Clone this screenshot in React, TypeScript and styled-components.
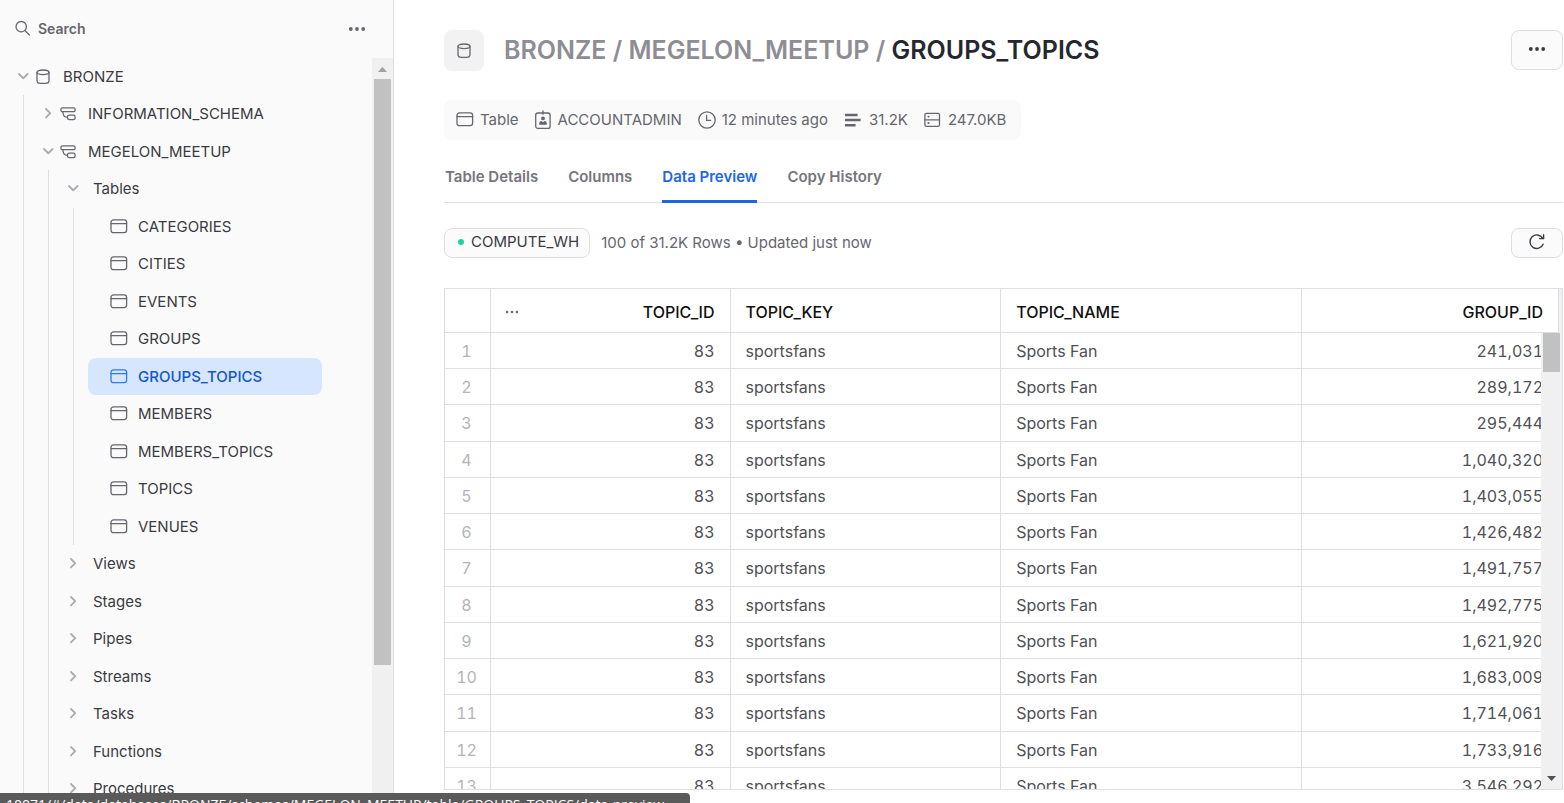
import React from "react";
import styled, { createGlobalStyle, css } from "styled-components";

const color = {
  text: "#3a3a42",
  muted: "#66666e",
  faint: "#8d8d93",
  line: "#dfdfe1",
  panel: "#fafafa",
  blue: "#1d66e5",
};

const Global = createGlobalStyle`
  *, *::before, *::after { box-sizing: border-box; }
  body {
    margin: 0;
    background: #fff;
    color: ${color.text};
    font-family: Inter, "Liberation Sans", sans-serif;
    font-size: 15px;
    overflow: hidden;
  }
  button, input { font: inherit; color: inherit; }
  a { color: inherit; text-decoration: none; }
  svg { display: block; flex: none; }
`;

const Page = styled.div`
  display: flex;
  height: 100vh;
`;

/* Sidebar */

const Sidebar = styled.aside`
  display: flex;
  flex-direction: column;
  flex: none;
  width: 394px;
  border-right: 1px solid ${color.line};
  background: ${color.panel};
`;

const SidebarHeader = styled.div`
  display: flex;
  align-items: center;
  justify-content: space-between;
  flex: none;
  height: 58px;
  padding: 0 26px 0 14px;
`;

const SearchLabel = styled.label`
  display: flex;
  align-items: center;
  gap: 7px;
  padding-bottom: 2px;
  color: ${color.muted};
`;

const SearchInput = styled.input`
  width: 240px;
  padding: 0;
  border: 0;
  outline: 0;
  background: transparent;
  font-size: 14px;
  font-weight: 600;
  &::placeholder { color: ${color.muted}; opacity: 1; }
`;

const PlainButton = styled.button`
  display: flex;
  padding: 0;
  border: 0;
  background: none;
  color: ${color.muted};
`;

const SidebarBody = styled.div`
  display: flex;
  flex: 1;
  min-height: 0;
`;

const Tree = styled.ul`
  flex: 1;
  margin: 0;
  padding: 0 0 0 10px;
  overflow: hidden;
  list-style: none;
`;

const TreeRow = styled.li`
  display: flex;
  align-items: stretch;
  height: 37px;
  &:nth-child(even) { height: 38px; }
`;

const Guide = styled.span`
  flex: none;
  width: 25px;
  background: linear-gradient(${color.line}, ${color.line}) 13px 0 / 1px 100% no-repeat;
`;

const Toggle = styled.button`
  display: flex;
  align-items: center;
  justify-content: center;
  flex: none;
  width: 25px;
  height: 36px;
  padding: 0;
  border: 0;
  background: none;
  color: #adadb1;
`;

const NodeLink = styled.a<{ $kind: Kind; $selected?: boolean }>`
  display: flex;
  align-items: center;
  gap: 12px;
  height: 37px;
  white-space: nowrap;
  svg { color: ${color.muted}; }
  ${(p) => p.$kind === "group" && css`padding-left: 8px;`}
  ${(p) =>
    p.$kind === "table" &&
    css`
      flex: 1;
      gap: 10px;
      margin: 0 50px 0 3px;
      padding-left: 22px;
      border-radius: 8px;
    `}
  ${(p) =>
    p.$selected &&
    css`
      background: #d6e6ff;
      color: #1455cc;
      font-weight: 500;
      svg { color: #2f78f0; }
    `}
`;

const ScrollTrack = styled.div`
  flex: none;
  width: 21px;
  padding: 9px 2px 0;
  background: #f0f0f0;
`;

const ScrollArrow = styled.div`
  height: 12px;
  padding-left: 4px;
  color: #a0a0a0;
`;

const ScrollThumb = styled.div`
  height: 586px;
  background: #c1c1c1;
`;

/* Main area */

const Main = styled.main`
  display: flex;
  flex: 1;
  flex-direction: column;
  min-width: 0;
  padding: 30px 1px 13px 50px;
`;

const TitleBar = styled.header`
  display: flex;
  align-items: flex-start;
  gap: 20px;
  height: 41px;
`;

const TitleIcon = styled.span`
  display: flex;
  align-items: center;
  justify-content: center;
  width: 40px;
  height: 41px;
  border-radius: 8px;
  background: #f2f2f2;
  color: ${color.muted};
`;

const Title = styled.h1`
  flex: 1;
  margin: 0;
  color: ${color.faint};
  font-size: 25px;
  font-weight: 600;
  line-height: 40px;
  white-space: nowrap;
  strong { color: #26272e; font-weight: 600; }
`;

const IconButton = styled.button<{ $tall?: boolean }>`
  display: flex;
  align-items: center;
  justify-content: center;
  width: 52px;
  height: ${(p) => (p.$tall ? 40 : 30)}px;
  padding: 0 0 2px;
  border: 1px solid ${color.line};
  border-radius: 8px;
  background: #fbfbfb;
`;

const Facts = styled.ul`
  display: flex;
  align-items: center;
  align-self: flex-start;
  gap: 16px;
  height: 40px;
  margin: 29px 0 0;
  padding: 0 15px 1px 12px;
  border-radius: 8px;
  background: ${color.panel};
  color: ${color.muted};
  list-style: none;
`;

const Fact = styled.li`
  display: flex;
  align-items: center;
  gap: 6px;
  white-space: nowrap;
`;

const Tabs = styled.nav`
  display: flex;
  gap: 30px;
  height: 63px;
  padding-left: 1px;
  border-bottom: 1px solid ${color.line};
`;

const Tab = styled.a<{ $active?: boolean }>`
  height: 63px;
  padding-top: 25px;
  border-bottom: 3px solid ${(p) => (p.$active ? color.blue : "transparent")};
  color: ${(p) => (p.$active ? color.blue : "#75757b")};
  font-weight: 600;
  line-height: 24px;
`;

const Toolbar = styled.div`
  display: flex;
  align-items: center;
  gap: 11px;
  margin: 25px 0 30px;
`;

const WarehouseButton = styled.button`
  display: flex;
  align-items: center;
  gap: 7px;
  height: 30px;
  padding: 0 10px 3px 13px;
  border: 1px solid ${color.line};
  border-radius: 8px;
  background: #fbfbfb;
`;

const StatusDot = styled.span`
  width: 6px;
  height: 6px;
  border-radius: 50%;
  background: #17d79c;
`;

const RowInfo = styled.span`
  flex: 1;
  padding-bottom: 2px;
  color: ${color.muted};
`;

const GridPanel = styled.div`
  position: relative;
  flex: 1;
  min-height: 0;
  padding-right: 3px;
  overflow: hidden;
  border: 1px solid ${color.line};
  border-width: 1px 1px 1px 0;
  background: #f0f0f0;
`;

const DataTable = styled.table`
  width: 100%;
  border-collapse: separate;
  border-spacing: 0;
  border-left: 1px solid ${color.line};
  table-layout: fixed;
  background: #fff;
  color: #505055;
  font-size: 16px;
  font-variant-numeric: tabular-nums;
  tbody tr { height: 36px; }
  tbody tr:nth-child(4n + 3) { height: 37px; }
`;

const Cell = styled.td<{ $align?: "right" | "center" }>`
  padding: 0 15px;
  border: solid ${color.line};
  border-width: 0 1px 1px 0;
  font-weight: 400;
  line-height: 20px;
  text-align: ${(p) => p.$align ?? "left"};
  white-space: nowrap;
`;

const HeadCell = styled(Cell).attrs({ as: "th" })`
  height: 44px;
  padding-top: 3px;
  color: #111;
  font-weight: 500;
`;

const IndexCell = styled(Cell)`
  padding-right: 2px;
  padding-left: 0;
  color: #b4b4b8;
`;

const HeadContent = styled.div`
  display: flex;
  align-items: center;
  justify-content: space-between;
`;

const GridScroll = styled.div`
  position: absolute;
  top: 44px;
  right: 0;
  bottom: 0;
  display: flex;
  flex-direction: column;
  justify-content: space-between;
  width: 21px;
  padding: 0 2px 8px;
  background: #f0f0f0;
  color: #505050;
`;

const GridThumb = styled.div`
  height: 39px;
  background: #c1c1c1;
`;

const ArrowSlot = styled.div`
  padding-left: 4px;
`;

const StatusBubble = styled.div`
  position: fixed;
  bottom: 0;
  left: 0;
  width: 690px;
  height: 10px;
  padding: 2px 6px 0;
  overflow: hidden;
  border-top-right-radius: 4px;
  background: #5a5a5a;
  color: #fff;
  font-family: "Open Sans", "Noto Sans", sans-serif;
  font-size: 14px;
  line-height: 19px;
  white-space: nowrap;
`;

/* Icons */

const stroke = {
  fill: "none",
  stroke: "currentColor",
  strokeWidth: 1.3,
  strokeLinecap: "round" as const,
  strokeLinejoin: "round" as const,
  "aria-hidden": true,
};

const SearchIcon = () => (
  <svg width="17" height="17" viewBox="0 0 17 17" {...stroke}>
    <circle cx="7.2" cy="6.7" r="5.2" />
    <path d="M11 10.6 15.4 15" />
  </svg>
);

const DotsIcon = ({ size = 18, r = 1.9, gap = 6.2 }) => (
  <svg width={size} height="6" viewBox={`0 0 ${size} 6`} fill="currentColor" aria-hidden>
    <circle cx={size / 2 - gap} cy="3" r={r} />
    <circle cx={size / 2} cy="3" r={r} />
    <circle cx={size / 2 + gap} cy="3" r={r} />
  </svg>
);

const ChevronIcon = ({ open }: { open: boolean }) => (
  <svg width="12" height="12" viewBox="0 0 12 12" {...stroke} strokeWidth={1.9}>
    <path d={open ? "M2 4 6.3 8.2 10.6 4" : "M4 2 8.2 6.2 4 10.4"} />
  </svg>
);

const DatabaseIcon = () => (
  <svg width="16" height="16" viewBox="0 0 16 16" {...stroke}>
    <ellipse cx="8" cy="3.3" rx="6" ry="2.3" />
    <path d="M2 3.3v8.2c0 1.8 1.6 2.9 3.6 2.9h4.8c2 0 3.6-1.1 3.6-2.9V3.3" />
  </svg>
);

const SchemaIcon = () => (
  <svg width="16" height="16" viewBox="0 0 16 16" {...stroke}>
    <rect x="0.9" y="1.9" width="14.2" height="3.8" rx="1.5" />
    <rect x="7.5" y="9.2" width="7.6" height="4.4" rx="1.7" />
    <path d="M2.9 5.7c0 3.6 1.7 5.6 4.6 5.6" />
  </svg>
);

const TableIcon = () => (
  <svg width="18" height="16" viewBox="0 0 18 16" {...stroke}>
    <rect x="1" y="0.9" width="15.6" height="12.8" rx="2.4" />
    <path d="M1 4.6h15.6" />
  </svg>
);

const RoleIcon = () => (
  <svg width="17" height="20" viewBox="1 0 17 20" {...stroke}>
    <rect x="1.7" y="3" width="14.4" height="15.4" rx="2.2" />
    <path d="M9 .8v3.4" />
    <circle cx="9" cy="8.4" r="1.9" fill="currentColor" stroke="none" />
    <path d="M5.2 14.8v-1.6c0-1.4 1.2-2.3 2.4-2.3L9 12.3l1.4-1.4c1.2 0 2.4.9 2.4 2.3v1.6z" fill="currentColor" stroke="none" />
  </svg>
);

const ClockIcon = () => (
  <svg width="18" height="20" viewBox="1 0 18 20" {...stroke}>
    <circle cx="10" cy="10" r="8.2" />
    <path d="M9.6 5.4v5h4" />
  </svg>
);

const RowsIcon = () => (
  <svg width="19" height="16" viewBox="0 0 19 16" {...stroke} strokeWidth={2.5} strokeLinecap="butt">
    <path d="M1 2.9h12.6M1 8.1h15.6M1 13.3h10.6" />
  </svg>
);

const StorageIcon = () => (
  <svg width="18" height="16" viewBox="1 0 18 16" {...stroke}>
    <rect x="1.9" y="1.3" width="14.6" height="13" rx="1.6" />
    <path d="M1.9 7.8h14.6" />
    <path d="M5.3 4.6h.4M5.3 11h.4" strokeWidth={1.8} />
  </svg>
);

const RefreshIcon = () => (
  <svg width="18" height="18" viewBox="0 0 18 18" {...stroke} strokeWidth={1.4}>
    <path d="M15.1 11.2A6.8 6.8 0 1 1 14.6 5.2" />
    <path d="M15.6 1.8v3.8h-4" />
  </svg>
);

const TriangleIcon = ({ down }: { down?: boolean }) => (
  <svg width="9" height="5" viewBox="0 0 9 5" fill="currentColor" aria-hidden>
    <path d={down ? "M0 0h9L4.5 5z" : "M0 5h9L4.5 0z"} />
  </svg>
);

/* Data */

type Kind = "database" | "schema" | "group" | "table";

interface TreeNode {
  kind: Kind;
  name: string;
  open?: boolean;
}

const depth: Record<Kind, number> = { database: 0, schema: 1, group: 2, table: 3 };

const kindIcon: Record<Kind, React.ReactNode> = {
  database: <DatabaseIcon />,
  schema: <SchemaIcon />,
  group: null,
  table: <TableIcon />,
};

const tables = [
  "CATEGORIES", "CITIES", "EVENTS", "GROUPS", "GROUPS_TOPICS",
  "MEMBERS", "MEMBERS_TOPICS", "TOPICS", "VENUES",
];

const closedGroups = ["Views", "Stages", "Pipes", "Streams", "Tasks", "Functions", "Procedures"];

const nodes: TreeNode[] = [
  { kind: "database", name: "BRONZE", open: true },
  { kind: "schema", name: "INFORMATION_SCHEMA" },
  { kind: "schema", name: "MEGELON_MEETUP", open: true },
  { kind: "group", name: "Tables", open: true },
  ...tables.map((name): TreeNode => ({ kind: "table", name })),
  ...closedGroups.map((name): TreeNode => ({ kind: "group", name })),
];

const facts: [React.ReactNode, string][] = [
  [<TableIcon />, "Table"],
  [<RoleIcon />, "ACCOUNTADMIN"],
  [<ClockIcon />, "12 minutes ago"],
  [<RowsIcon />, "31.2K"],
  [<StorageIcon />, "247.0KB"],
];

const tabs = ["Table Details", "Columns", "Data Preview", "Copy History"];

const groupIds = [
  "241,031", "289,172", "295,444", "1,040,320", "1,403,055", "1,426,482", "1,491,757",
  "1,492,775", "1,621,920", "1,683,009", "1,714,061", "1,733,916", "3,546,292",
];

const selectedTable = "GROUPS_TOPICS";

export default function App() {
  return (
    <>
      <Global />
      <Page>
        <Sidebar>
          <SidebarHeader>
            <SearchLabel>
              <SearchIcon />
              <SearchInput type="text" placeholder="Search" aria-label="Search" />
            </SearchLabel>
            <PlainButton aria-label="More options">
              <DotsIcon size={20} />
            </PlainButton>
          </SidebarHeader>
          <SidebarBody>
            <Tree>
              {nodes.map((node) => (
                <TreeRow key={node.name}>
                  {Array.from({ length: depth[node.kind] }, (_, i) => (
                    <Guide key={i} />
                  ))}
                  {node.kind !== "table" && (
                    <Toggle aria-label={`Toggle ${node.name}`} aria-expanded={!!node.open}>
                      <ChevronIcon open={!!node.open} />
                    </Toggle>
                  )}
                  <NodeLink href="#" $kind={node.kind} $selected={node.name === selectedTable}>
                    {kindIcon[node.kind]}
                    {node.name}
                  </NodeLink>
                </TreeRow>
              ))}
            </Tree>
            <ScrollTrack>
              <ScrollArrow>
                <TriangleIcon />
              </ScrollArrow>
              <ScrollThumb />
            </ScrollTrack>
          </SidebarBody>
        </Sidebar>

        <Main>
          <TitleBar>
            <TitleIcon>
              <DatabaseIcon />
            </TitleIcon>
            <Title>
              BRONZE / MEGELON_MEETUP / <strong>GROUPS_TOPICS</strong>
            </Title>
            <IconButton $tall aria-label="More actions">
              <DotsIcon />
            </IconButton>
          </TitleBar>

          <Facts>
            {facts.map(([icon, label]) => (
              <Fact key={label}>
                {icon}
                {label}
              </Fact>
            ))}
          </Facts>

          <Tabs>
            {tabs.map((tab) => (
              <Tab key={tab} href="#" $active={tab === "Data Preview"}>
                {tab}
              </Tab>
            ))}
          </Tabs>

          <Toolbar>
            <WarehouseButton>
              <StatusDot />
              COMPUTE_WH
            </WarehouseButton>
            <RowInfo>100 of 31.2K Rows • Updated just now</RowInfo>
            <IconButton aria-label="Refresh">
              <RefreshIcon />
            </IconButton>
          </Toolbar>

          <GridPanel>
            <DataTable>
              <colgroup>
                <col style={{ width: 46 }} />
                <col style={{ width: "21.5%" }} />
                <col style={{ width: "24.3%" }} />
                <col style={{ width: "27%" }} />
                <col />
              </colgroup>
              <thead>
                <tr>
                  <HeadCell aria-label="Row" />
                  <HeadCell $align="right">
                    <HeadContent>
                      <PlainButton aria-label="Column options">
                        <DotsIcon size={12} r={1.3} gap={5} />
                      </PlainButton>
                      TOPIC_ID
                    </HeadContent>
                  </HeadCell>
                  <HeadCell>TOPIC_KEY</HeadCell>
                  <HeadCell>TOPIC_NAME</HeadCell>
                  <HeadCell $align="right">GROUP_ID</HeadCell>
                </tr>
              </thead>
              <tbody>
                {groupIds.map((id, i) => (
                  <tr key={id}>
                    <IndexCell $align="center">{i + 1}</IndexCell>
                    <Cell $align="right">83</Cell>
                    <Cell>sportsfans</Cell>
                    <Cell>Sports Fan</Cell>
                    <Cell $align="right">{id}</Cell>
                  </tr>
                ))}
              </tbody>
            </DataTable>
            <GridScroll>
              <GridThumb />
              <ArrowSlot>
                <TriangleIcon down />
              </ArrowSlot>
            </GridScroll>
          </GridPanel>
        </Main>
      </Page>
      <StatusBubble>
        10071/#/data/databases/BRONZE/schemas/MEGELON_MEETUP/table/GROUPS_TOPICS/data-preview
      </StatusBubble>
    </>
  );
}
